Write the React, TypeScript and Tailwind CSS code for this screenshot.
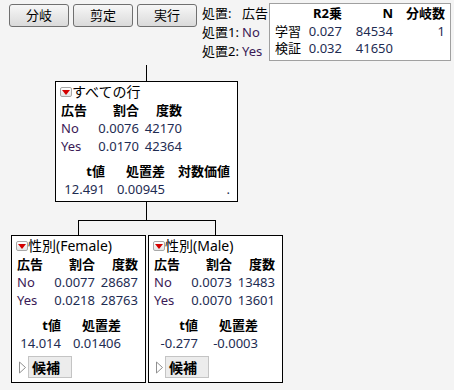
const font = "font-['Noto_Sans','Noto_Sans_CJK_JP',sans-serif]";

type Row = { label: string; rate: string; count: string };

function RedTriangle() {
  return (
    <span className="flex h-[10px] w-[12px] items-center justify-center rounded-[2px] border border-[#a8a8a8] bg-gradient-to-b from-white to-[#e4e4e4]">
      <svg width="8" height="5" viewBox="0 0 8 5">
        <path d="M0 0H8L4 5Z" fill="#d40000" />
      </svg>
    </span>
  );
}

function TreeNode({
  title,
  rows,
  stats,
  candidate,
  className,
}: {
  title: string;
  rows: Row[];
  stats: { head: string; value: string }[];
  candidate?: boolean;
  className: string;
}) {
  return (
    <div className={`flex flex-col border border-black bg-white pt-px ${className}`}>
      <div className="flex h-[18px] items-center pl-[4px]">
        <RedTriangle />
        <span className="text-[14px] leading-none text-black">{title}</span>
      </div>
      <div className="grid grid-cols-[34px_44px_43px] pl-[5px] text-[13px] leading-[18px]">
        <span className="font-bold text-black">広告</span>
        <span className="text-right font-bold text-black">割合</span>
        <span className="text-right font-bold text-black">度数</span>
        {rows.map((r) => (
          <div key={r.label} className="contents">
            <span className="text-[#3a1a56]">{r.label}</span>
            <span className="text-right text-[#1e2c52]">{r.rate}</span>
            <span className="text-right text-[#1e2c52]">{r.count}</span>
          </div>
        ))}
      </div>
      <div className={`mt-[7px] grid pl-[5px] text-[13px] leading-[18px] ${stats.length === 3 ? "grid-cols-[44px_60px_65px]" : "grid-cols-[44px_60px]"}`}>
        {stats.map((s) => (
          <span key={s.head} className="text-right font-bold text-black">
            {s.head}
          </span>
        ))}
        {stats.map((s) => (
          <span key={s.head + "v"} className="text-right text-[#1e2c52]">
            {s.value}
          </span>
        ))}
      </div>
      {candidate && (
        <div className="mt-[4px] flex items-center pl-[6px]">
          <svg width="9" height="13" viewBox="0 0 9 13" className="mr-[1px]">
            <path d="M1.5 1L7.5 6.5L1.5 12Z" fill="white" stroke="#909090" strokeWidth="1" />
          </svg>
          <span className="flex h-[22px] w-[44px] items-center border border-[#c4c4c4] bg-[#ececec] pl-[3px] text-[14px] font-bold text-black">
            候補
          </span>
        </div>
      )}
    </div>
  );
}

export default function App() {
  return (
    <div className={`h-[390px] w-[454px] bg-[#f4f4f4] ${font}`}>
      <div className="flex items-start pt-[3px]">
        <div className="ml-[9px] mt-px flex gap-[4px]">
          {["分岐", "剪定", "実行"].map((b) => (
            <button
              key={b}
              type="button"
              className="h-[23px] w-[60px] rounded-[3px] border border-[#707070] bg-gradient-to-b from-[#f7f7f7] to-[#dadada] text-[13px] leading-none text-black"
            >
              {b}
            </button>
          ))}
        </div>
        <div className="ml-[5px] mt-px grid w-[67px] grid-cols-[40px_27px] text-[13px] leading-[19px] text-black">
          <span>処置:</span>
          <span>広告</span>
          <span>処置1:</span>
          <span className="text-[#3a1a56]">No</span>
          <span>処置2:</span>
          <span className="text-[#3a1a56]">Yes</span>
        </div>
        <div className="h-[58px] w-[182px] border border-[#a0a0a0] bg-white pl-[5px]">
          <div className="grid grid-cols-[30px_37px_51px_52px] text-[13px]">
            <span className="h-[19px]" />
            <span className="h-[19px] text-right font-bold leading-[19px] text-black">R2乗</span>
            <span className="h-[19px] text-right font-bold leading-[19px] text-black">N</span>
            <span className="h-[19px] text-right font-bold leading-[19px] text-black">分岐数</span>
            <span className="leading-[17px] text-black">学習</span>
            <span className="text-right leading-[17px] text-[#1e2c52]">0.027</span>
            <span className="text-right leading-[17px] text-[#1e2c52]">84534</span>
            <span className="text-right leading-[17px] text-[#1e2c52]">1</span>
            <span className="leading-[17px] text-black">検証</span>
            <span className="text-right leading-[17px] text-[#1e2c52]">0.032</span>
            <span className="text-right leading-[17px] text-[#1e2c52]">41650</span>
            <span />
          </div>
        </div>
      </div>

      <div className="ml-[11px] w-[272px]">
        <div className="ml-[135px] mt-[4px] h-[16px] w-px bg-black" />
        <TreeNode
          className="ml-[44px] h-[121px] w-[183px]"
          title="すべての行"
          rows={[
            { label: "No", rate: "0.0076", count: "42170" },
            { label: "Yes", rate: "0.0170", count: "42364" },
          ]}
          stats={[
            { head: "t値", value: "12.491" },
            { head: "処置差", value: "0.00945" },
            { head: "対数価値", value: "." },
          ]}
        />
        <div className="ml-[135px] h-[18px] w-px bg-black" />
        <div className="ml-[67px] h-[15px] w-[138px] border-x border-t border-black" />
        <div className="flex gap-[2px]">
          <TreeNode
            className="h-[148px] w-[135px]"
            title="性別(Female)"
            rows={[
              { label: "No", rate: "0.0077", count: "28687" },
              { label: "Yes", rate: "0.0218", count: "28763" },
            ]}
            stats={[
              { head: "t値", value: "14.014" },
              { head: "処置差", value: "0.01406" },
            ]}
            candidate
          />
          <TreeNode
            className="h-[148px] w-[135px]"
            title="性別(Male)"
            rows={[
              { label: "No", rate: "0.0073", count: "13483" },
              { label: "Yes", rate: "0.0070", count: "13601" },
            ]}
            stats={[
              { head: "t値", value: "-0.277" },
              { head: "処置差", value: "-0.0003" },
            ]}
            candidate
          />
        </div>
      </div>
    </div>
  );
}
